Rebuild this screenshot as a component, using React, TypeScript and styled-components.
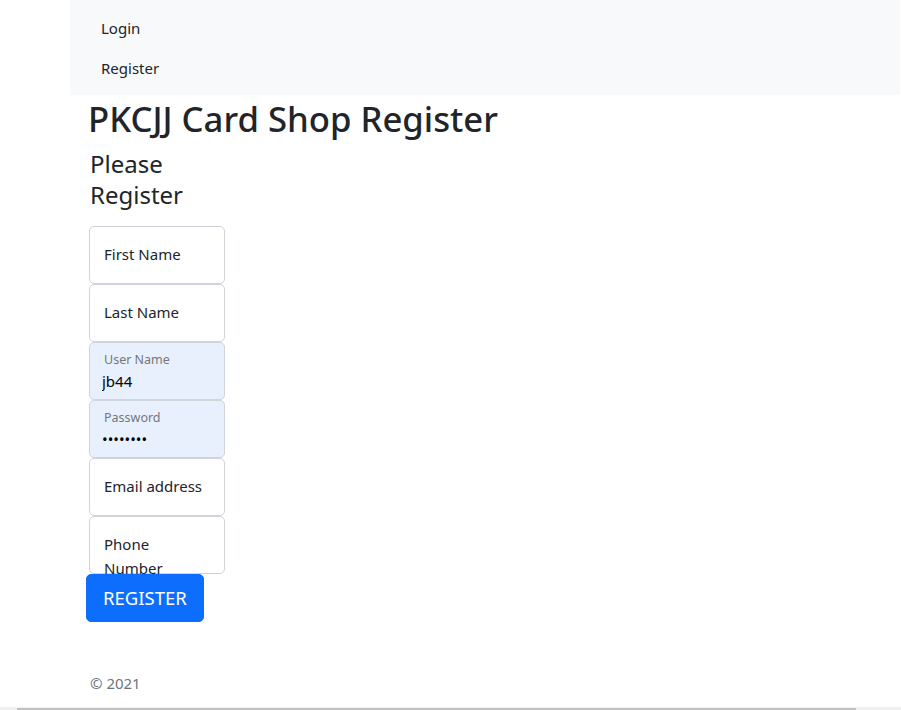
import React from "react";
import styled, { createGlobalStyle } from "styled-components";

const GlobalStyle = createGlobalStyle`
  html, body { margin: 0; padding: 0; background: #fff; }
  body {
    font-family: "Noto Sans", "Open Sans", sans-serif;
    font-size: 15px;
    line-height: 1.5;
    color: #212529;
    overflow: hidden;
  }
  * { box-sizing: border-box; }
`;

const Page = styled.div`
  margin-left: 70px;
  width: 830px;
  min-height: 710px;
  display: flex;
  flex-direction: column;
`;

const Navbar = styled.nav`
  background: #f8f9fa;
  padding: 8px 15px;
  height: 95px;
`;

const NavList = styled.ul`
  list-style: none;
  margin: 0;
  padding: 0;
  display: flex;
  flex-direction: column;
`;

const NavLink = styled.a`
  display: block;
  padding: 8px 16px;
  line-height: 24px;
  font-size: 15px;
  color: #212529;
  text-decoration: none;
`;

const Main = styled.main`
  padding-left: 18px;
`;

const Title = styled.h1`
  margin: 3px 0 8px;
  font-size: 34.7px;
  font-weight: 500;
  line-height: 1.2;
`;

const Column = styled.div`
  width: 137px;
  margin-left: 1px;
  display: flex;
  flex-direction: column;
`;

const Subtitle = styled.h3`
  margin: 0 0 16px;
  padding-left: 1px;
  font-size: 24px;
  font-weight: 400;
  line-height: 31px;
`;

const Floating = styled.div`
  position: relative;
  width: 136px;
  height: 58px;
`;

const Input = styled.input<{ $filled?: boolean }>`
  width: 100%;
  height: 58px;
  border: 1px solid #ced4da;
  border-radius: 5px;
  background: ${(p) => (p.$filled ? "#e8f0fe" : "#fff")};
  padding: 26px 12px 6px;
  font-family: inherit;
  font-size: 15px;
  color: #000;
  outline: none;
  &::placeholder { color: transparent; }
`;

const Label = styled.label<{ $small?: boolean }>`
  position: absolute;
  top: 0;
  left: 0;
  width: 100%;
  height: 100%;
  overflow: hidden;
  padding: ${(p) => (p.$small ? "8px 15px" : "16px 15px")};
  font-size: ${(p) => (p.$small ? "12.5px" : "15px")};
  line-height: ${(p) => (p.$small ? "19px" : "24px")};
  color: ${(p) => (p.$small ? "#74777a" : "#212529")};
  pointer-events: none;
`;

const Button = styled.button`
  align-self: flex-start;
  margin-left: -3px;
  height: 48px;
  padding: 0 16px;
  border: 1px solid #0d6efd;
  border-radius: 5px;
  background: #0d6efd;
  color: #fff;
  font-family: inherit;
  font-size: 18.5px;
  line-height: 30px;
  cursor: pointer;
`;

const Footer = styled.footer`
  margin-top: 49px;
  padding-left: 2px;
  color: #6c757d;
  font-size: 15px;
  line-height: 24px;
`;

const ScrollTrack = styled.div`
  position: fixed;
  left: 0;
  right: 0;
  bottom: 0;
  height: 3px;
  background: #f0f0f0;
`;

const ScrollThumb = styled.div`
  position: absolute;
  left: 17px;
  width: 839px;
  top: 1px;
  height: 2px;
  background: #c1c1c1;
`;

type Field = { id: string; label: string; value?: string; type?: string };

const fields: Field[] = [
  { id: "first", label: "First Name" },
  { id: "last", label: "Last Name" },
  { id: "user", label: "User Name", value: "jb44" },
  { id: "pass", label: "Password", value: "password", type: "password" },
  { id: "email", label: "Email address" },
  { id: "phone", label: "Phone Number" },
];

export default function App() {
  return (
    <>
      <GlobalStyle />
      <Page>
        <Navbar>
          <NavList>
            <li><NavLink href="#">Login</NavLink></li>
            <li><NavLink href="#">Register</NavLink></li>
          </NavList>
        </Navbar>
        <Main>
          <Title>PKCJJ Card Shop Register</Title>
          <Column>
            <Subtitle>Please Register</Subtitle>
            {fields.map((f) => (
              <Floating key={f.id}>
                <Input
                  id={f.id}
                  type={f.type ?? "text"}
                  placeholder={f.label}
                  defaultValue={f.value}
                  $filled={!!f.value}
                  readOnly
                />
                <Label htmlFor={f.id} $small={!!f.value}>{f.label}</Label>
              </Floating>
            ))}
            <Button>REGISTER</Button>
          </Column>
          <Footer>© 2021</Footer>
        </Main>
      </Page>
      <ScrollTrack>
        <ScrollThumb />
      </ScrollTrack>
    </>
  );
}
